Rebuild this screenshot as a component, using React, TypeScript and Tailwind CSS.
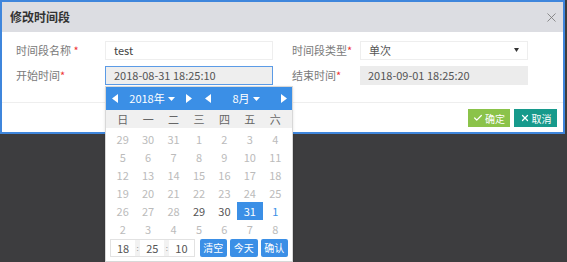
import { Check, X } from "lucide-react";

const font = { fontFamily: '"Noto Sans CJK SC", "Noto Sans", sans-serif' };

const weekdays = ["日", "一", "二", "三", "四", "五", "六"];

type Day = { n: number; kind: "off" | "on" | "sel" | "mark" };

const days: Day[] = [
  ...[29, 30, 31, 1, 2, 3, 4, 5, 6, 7, 8, 9, 10, 11, 12, 13, 14, 15, 16, 17, 18, 19, 20, 21, 22, 23, 24, 25, 26, 27, 28].map(
    (n) => ({ n, kind: "off" as const })
  ),
  { n: 29, kind: "on" },
  { n: 30, kind: "on" },
  { n: 31, kind: "sel" },
  { n: 1, kind: "mark" },
  ...[2, 3, 4, 5, 6, 7, 8].map((n) => ({ n, kind: "off" as const })),
];

function Caret({ dir }: { dir: "l" | "r" }) {
  return (
    <svg width="6" height="9" viewBox="0 0 6 9" className="fill-white">
      {dir === "l" ? <path d="M6 0v9L0 4.5z" /> : <path d="M0 0v9l6-4.5z" />}
    </svg>
  );
}

function Down() {
  return (
    <svg width="7" height="4" viewBox="0 0 7 4" className="fill-white ml-[3px]">
      <path d="M0 0h7L3.5 4z" />
    </svg>
  );
}

function Label({ text, spaced }: { text: string; spaced?: boolean }) {
  return (
    <div className="text-[11px] text-[#7a7a7a] leading-none">
      {text}
      <span className="text-[#e33]">{spaced ? " *" : "*"}</span>
    </div>
  );
}

function DatePicker() {
  return (
    <div className="absolute left-[105px] top-[86px] w-[188px] bg-white border border-[#d8d8d8] shadow-sm">
      <div className="h-[23px] bg-[#3b8fe6] flex items-center text-white text-[11px]">
        <div className="w-1/2 flex items-center justify-between pl-[6px] pr-[7px]">
          <Caret dir="l" />
          <span className="flex items-center">2018年<Down /></span>
          <Caret dir="r" />
        </div>
        <div className="w-1/2 flex items-center justify-between pl-[6px] pr-[5px]">
          <Caret dir="l" />
          <span className="flex items-center">8月<Down /></span>
          <Caret dir="r" />
        </div>
      </div>
      <div className="h-[18px] bg-[#f0f0f0] grid grid-cols-7 px-[4px] items-center text-[11px] text-[#666]">
        {weekdays.map((w) => (
          <div key={w} className="text-center">{w}</div>
        ))}
      </div>
      <div className="grid grid-cols-7 px-[4px] pt-[2px] text-[11px]">
        {days.map((d, i) => (
          <div
            key={i}
            className={`h-[18px] flex items-center justify-center ${
              d.kind === "sel"
                ? "bg-[#3b8fe6] text-white"
                : d.kind === "on"
                ? "text-[#555]"
                : d.kind === "mark"
                ? "text-[#3b8fe6]"
                : "text-[#bbbbbb]"
            }`}
          >
            {d.n}
          </div>
        ))}
      </div>
      <div className="flex items-center px-[4px] pt-[1px] pb-[4px] gap-[3px]">
        <div className="w-[86px] h-[18px] border border-[#e2e2e2] flex items-center text-[11px] text-[#555]">
          <span className="flex-1 text-center">18</span>
          <span className="w-[5px] h-full bg-[#f2f2f2] text-[8px] leading-[16px] text-center text-[#999]">:</span>
          <span className="flex-1 text-center">25</span>
          <span className="w-[5px] h-full bg-[#f2f2f2] text-[8px] leading-[16px] text-center text-[#999]">:</span>
          <span className="flex-1 text-center">10</span>
        </div>
        <button className="ml-[2px] w-[28px] h-[18px] rounded-[2px] bg-[#3b8fe6] text-white text-[10px] leading-none">清空</button>
        <button className="w-[28px] h-[18px] rounded-[2px] bg-[#3b8fe6] text-white text-[10px] leading-none">今天</button>
        <button className="w-[28px] h-[18px] rounded-[2px] bg-[#3b8fe6] text-white text-[10px] leading-none">确认</button>
      </div>
    </div>
  );
}

export default function App() {
  return (
    <div className="w-[567px] h-[262px] bg-[#3d3d3f] relative overflow-hidden" style={font}>
      <div className="w-[565px] h-[134px] bg-white border-2 border-[#3f86dc] flex flex-col">
        <div className="h-[30px] bg-[#dcdde2] flex items-center justify-between pl-[8px] pr-[4px]">
          <span className="text-[12px] font-bold text-[#333]">修改时间段</span>
          <X size={15} strokeWidth={1.3} className="text-[#777]" />
        </div>
        <div className="h-[71px] border-b border-[#eee] pl-[14px] pt-[9px] flex flex-col gap-[7px]">
          <div className="flex items-center h-[18px]">
            <div className="w-[89px]"><Label text="时间段名称" spaced /></div>
            <div className="w-[168px] h-[19px] border border-[#eee] flex items-center px-[8px] text-[11px] text-[#444]">test</div>
            <div className="w-[68px] ml-[19px]"><Label text="时间段类型" /></div>
            <div className="w-[168px] h-[19px] border border-[#eee] flex items-center justify-between px-[8px] text-[11px] text-[#555]">
              <span>单次</span>
              <svg width="5" height="4" viewBox="0 0 5 4" className="fill-[#333]"><path d="M0 0h5L2.5 4z" /></svg>
            </div>
          </div>
          <div className="flex items-center h-[19px]">
            <div className="w-[89px]"><Label text="开始时间" /></div>
            <div className="w-[168px] h-[19px] border border-[#5b9be6] bg-[#eeeeee] flex items-center px-[8px] text-[11px] text-[#555]">2018-08-31 18:25:10</div>
            <div className="w-[68px] ml-[19px]"><Label text="结束时间" /></div>
            <div className="w-[168px] h-[19px] bg-[#ececec] flex items-center px-[8px] text-[11px] text-[#555]">2018-09-01 18:25:20</div>
          </div>
        </div>
        <div className="flex-1 flex items-center justify-end gap-[4px] pr-[6px] pt-[1px]">
          <button className="w-[42px] h-[18px] bg-[#8bc34a] text-white text-[10px] flex items-center justify-center gap-[2px]">
            <Check size={10} strokeWidth={3} />确定
          </button>
          <button className="w-[43px] h-[18px] bg-[#179a8c] text-white text-[10px] flex items-center justify-center gap-[2px]">
            <X size={10} strokeWidth={3} />取消
          </button>
        </div>
      </div>
      <DatePicker />
    </div>
  );
}
